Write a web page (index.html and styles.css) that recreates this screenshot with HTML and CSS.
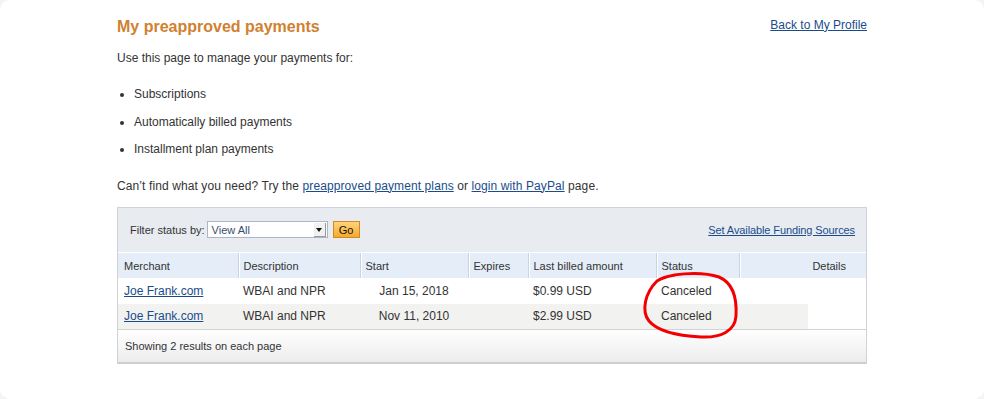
FILE: index.html
```html
<!DOCTYPE html>
<html>
<head>
    <title>My preapproved payments</title>
    <link rel="stylesheet" href="styles.css">
</head>
<body>
<div class="page">
    <div class="wrap">
        <div class="head">
            <h1>My preapproved payments</h1>
            <a href="#">Back to My Profile</a>
        </div>
        <p class="intro">Use this page to manage your payments for:</p>
        <ul class="kinds">
            <li>Subscriptions</li>
            <li>Automatically billed payments</li>
            <li>Installment plan payments</li>
        </ul>
        <p class="help">Can’t find what you need? Try the <a href="#">preapproved payment plans</a> or <a href="#">login with PayPal</a> page.</p>

        <div class="box">
            <div class="filter">
                <div class="filter-left">
                    <span>Filter status by:</span>
                    <div class="select"><span class="val">View All</span><span class="arrow"></span></div>
                    <button class="go">Go</button>
                </div>
                <a href="#">Set Available Funding Sources</a>
            </div>
            <table class="payments">
                <colgroup>
                    <col style="width:120px">
                    <col style="width:122px">
                    <col style="width:108px">
                    <col style="width:60px">
                    <col style="width:128px">
                    <col style="width:83px">
                    <col style="width:127px">
                </colgroup>
                <thead>
                    <tr>
                        <th>Merchant</th>
                        <th>Description</th>
                        <th>Start</th>
                        <th>Expires</th>
                        <th>Last billed amount</th>
                        <th>Status</th>
                        <th class="details">Details</th>
                    </tr>
                </thead>
                <tbody>
                    <tr>
                        <td><a href="#">Joe Frank.com</a></td>
                        <td>WBAI and NPR</td>
                        <td class="date">Jan 15, 2018</td>
                        <td></td>
                        <td>$0.99 USD</td>
                        <td>Canceled</td>
                        <td></td>
                    </tr>
                    <tr class="alt">
                        <td><a href="#">Joe Frank.com</a></td>
                        <td>WBAI and NPR</td>
                        <td class="date">Nov 11, 2010</td>
                        <td></td>
                        <td>$2.99 USD</td>
                        <td>Canceled</td>
                        <td class="part"></td>
                    </tr>
                </tbody>
            </table>
            <div class="foot">Showing 2 results on each page</div>

            <!-- red marker circle drawn over the status column -->
            <svg class="mark" width="100" height="74" viewBox="0 0 100 74">
                <path d="M 15 13 C 25 4, 60 2, 78 8 C 92 14, 96 30, 95 47 C 94 62, 80 69, 60 68 C 40 67, 18 64, 8 52 C 0 42, 4 24, 16 12 C 22 8, 28 7, 34 6" fill="none" stroke="#f20000" stroke-width="3" stroke-linecap="round"/>
            </svg>
        </div>
    </div>
</div>
</body>
</html>
```

FILE: styles.css
```css
html {
    background: #f4f4f4;
}
body {
    margin: 0;
    font-family: "Liberation Sans", Arial, sans-serif;
    font-size: 12px;
    color: #333;
}
.page {
    background: #fff;
    height: 399px;
    border-radius: 10px;
    overflow: hidden;
}
.wrap {
    width: 750px;
    margin: 0 auto;
    padding-top: 17px;
}
a {
    color: #1a4c8c;
}
.head {
    display: flex;
    justify-content: space-between;
    align-items: center;
}
.head h1 {
    margin: 0;
    font-size: 16px;
    line-height: 20px;
    color: #d0812f;
}
.head a {
    line-height: 16px;
    margin-top: -5px;
}
.intro {
    margin: 13px 0 0;
    line-height: 16px;
}
.kinds {
    margin: 15px 0 0;
    padding-left: 17px;
}
.kinds li {
    line-height: 27.5px;
}
.help {
    margin: 14px 0 0;
    line-height: 16px;
    letter-spacing: 0.1px;
}
.box {
    position: relative;
    margin-top: 13px;
    border: 1px solid #cfd2d6;
    border-bottom: 2px solid #cfcfcf;
}
.filter {
    height: 44px;
    background: #e8ebf0;
    border-bottom: 1px solid #fff;
    display: flex;
    align-items: center;
    justify-content: space-between;
    padding: 0 11px 0 12px;
    font-size: 11px;
}
.filter-left {
    display: flex;
    align-items: center;
}
.select {
    width: 119px;
    height: 15px;
    margin-left: 2px;
    border: 1px solid #a9b7c7;
    background: #fff;
    display: flex;
    justify-content: space-between;
    align-items: center;
}
.select .val {
    padding-left: 4px;
    color: #3a4d6e;
    font-size: 11px;
}
.select .arrow {
    width: 12px;
    height: 14px;
    margin-right: 1px;
    background: #f1f1f1;
    border-right: 1px solid #9a9a9a;
    border-bottom: 1px solid #9a9a9a;
    box-sizing: border-box;
    position: relative;
}
.select .arrow::after {
    content: "";
    position: absolute;
    left: 2px;
    top: 5px;
    border-left: 3px solid transparent;
    border-right: 3px solid transparent;
    border-top: 4px solid #111;
}
.go {
    width: 27px;
    height: 17px;
    margin-left: 5px;
    padding: 0;
    font-family: "Liberation Sans", Arial, sans-serif;
    font-size: 11px;
    color: #111;
    border: 1px solid #cf8a24;
    background: linear-gradient(#ffd47e, #f7a82a);
}
.filter > a {
    letter-spacing: -0.1px;
}
.payments {
    width: 748px;
    border-collapse: collapse;
    table-layout: fixed;
}
.payments th {
    height: 24px;
    padding: 1px 5px 0 6px;
    background: #e5edf8;
    font-size: 11px;
    font-weight: normal;
    text-align: left;
    border-right: 1px solid #c9d4e2;
    border-bottom: 1px solid #fff;
}
.payments th:nth-child(n+2) {
    padding-left: 5px;
    box-shadow: inset 1px 0 #fff;
}
.payments th.details {
    text-align: right;
    padding-right: 20px;
    border-right: none;
}
.payments td {
    height: 25px;
    padding: 0 5px 0 6px;
    font-size: 12px;
}
.payments td:nth-child(n+2) {
    padding-left: 5px;
}
.payments td.date {
    text-align: center;
    padding: 0;
}
.payments tr.alt td {
    background: #f2f2f0;
    border-bottom: 1px solid #d3d3d3;
}
.payments tr.alt td.part {
    background: linear-gradient(to right, #f2f2f0 69px, #fff 69px);
}
.foot {
    height: 32px;
    line-height: 33px;
    padding-left: 7px;
    font-size: 11px;
    background: linear-gradient(#fff, #ececec);
}
.mark {
    position: absolute;
    left: 523px;
    top: 61px;
}
```
